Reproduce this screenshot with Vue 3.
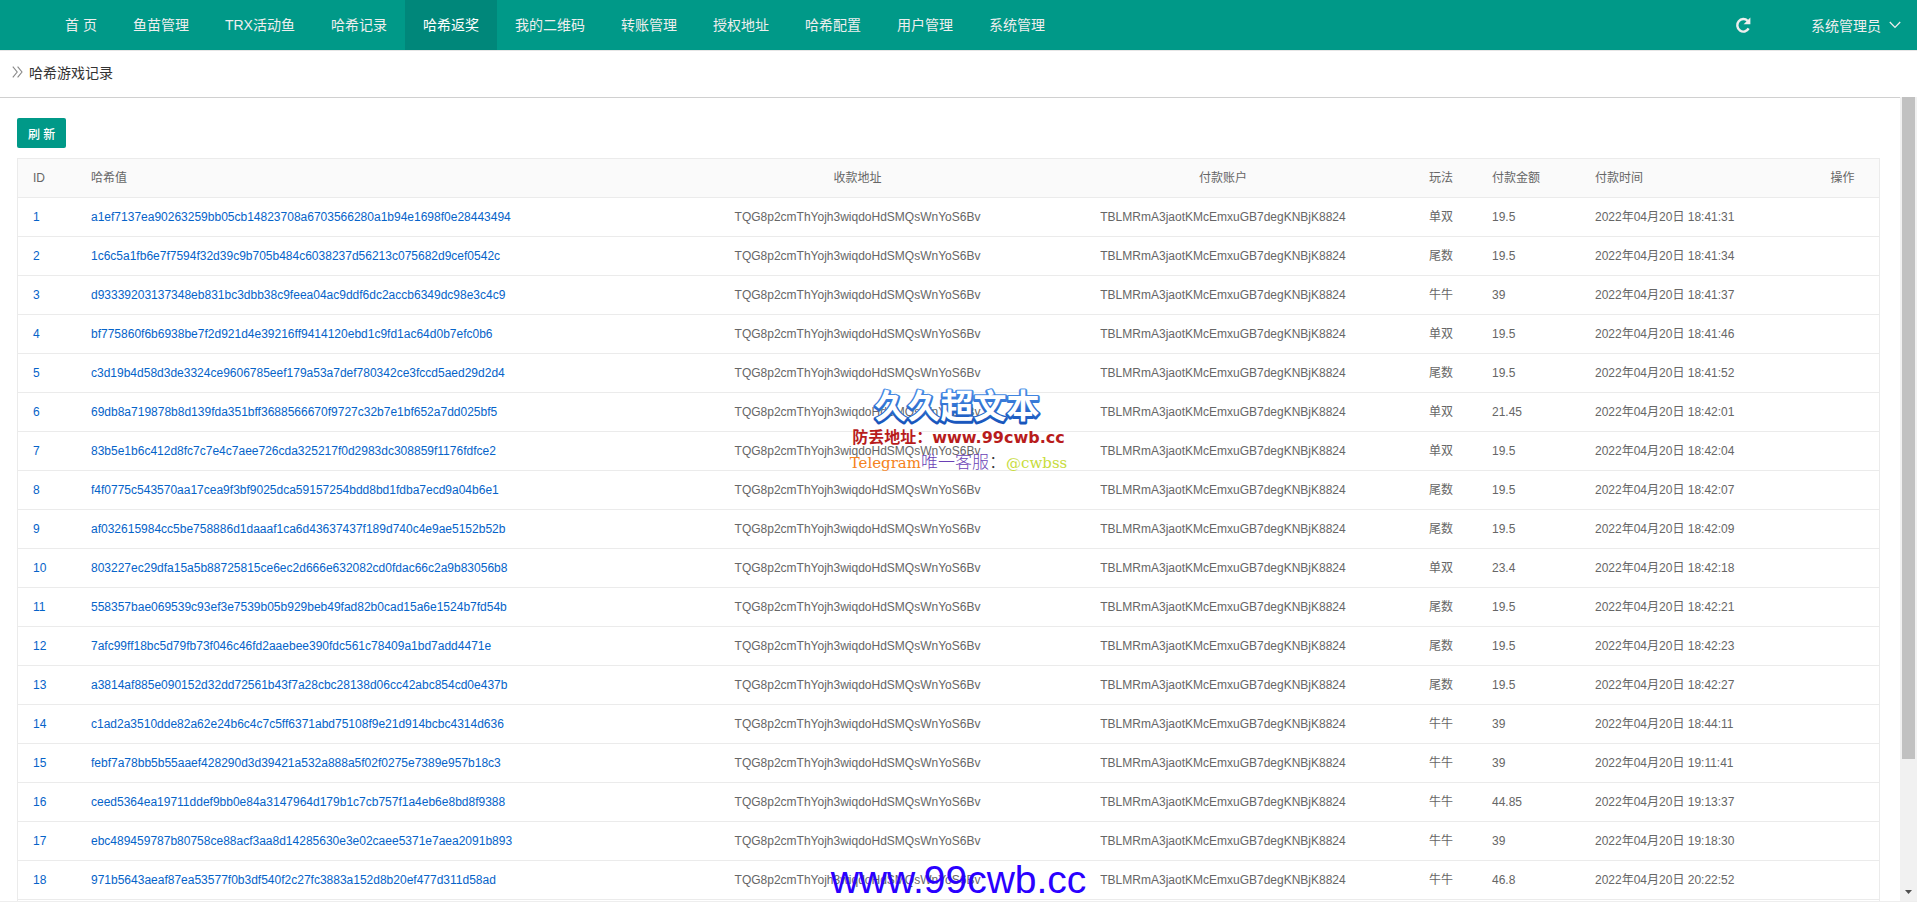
<script setup>
const nav = ['首 页', '鱼苗管理', 'TRX活动鱼', '哈希记录', '哈希返奖', '我的二维码', '转账管理', '授权地址', '哈希配置', '用户管理', '系统管理']
const active = '哈希返奖'

const receiver = 'TQG8p2cmThYojh3wiqdoHdSMQsWnYoS6Bv'
const payer = 'TBLMRmA3jaotKMcEmxuGB7degKNBjK8824'

const rows = [
  ['a1ef7137ea90263259bb05cb14823708a6703566280a1b94e1698f0e28443494', '单双', '19.5', '18:41:31'],
  ['1c6c5a1fb6e7f7594f32d39c9b705b484c6038237d56213c075682d9cef0542c', '尾数', '19.5', '18:41:34'],
  ['d93339203137348eb831bc3dbb38c9feea04ac9ddf6dc2accb6349dc98e3c4c9', '牛牛', '39', '18:41:37'],
  ['bf775860f6b6938be7f2d921d4e39216ff9414120ebd1c9fd1ac64d0b7efc0b6', '单双', '19.5', '18:41:46'],
  ['c3d19b4d58d3de3324ce9606785eef179a53a7def780342ce3fccd5aed29d2d4', '尾数', '19.5', '18:41:52'],
  ['69db8a719878b8d139fda351bff3688566670f9727c32b7e1bf652a7dd025bf5', '单双', '21.45', '18:42:01'],
  ['83b5e1b6c412d8fc7c7e4c7aee726cda325217f0d2983dc308859f1176fdfce2', '单双', '19.5', '18:42:04'],
  ['f4f0775c543570aa17cea9f3bf9025dca59157254bdd8bd1fdba7ecd9a04b6e1', '尾数', '19.5', '18:42:07'],
  ['af032615984cc5be758886d1daaaf1ca6d43637437f189d740c4e9ae5152b52b', '尾数', '19.5', '18:42:09'],
  ['803227ec29dfa15a5b88725815ce6ec2d666e632082cd0fdac66c2a9b83056b8', '单双', '23.4', '18:42:18'],
  ['558357bae069539c93ef3e7539b05b929beb49fad82b0cad15a6e1524b7fd54b', '尾数', '19.5', '18:42:21'],
  ['7afc99ff18bc5d79fb73f046c46fd2aaebee390fdc561c78409a1bd7add4471e', '尾数', '19.5', '18:42:23'],
  ['a3814af885e090152d32dd72561b43f7a28cbc28138d06cc42abc854cd0e437b', '尾数', '19.5', '18:42:27'],
  ['c1ad2a3510dde82a62e24b6c4c7c5ff6371abd75108f9e21d914bcbc4314d636', '牛牛', '39', '18:44:11'],
  ['febf7a78bb5b55aaef428290d3d39421a532a888a5f02f0275e7389e957b18c3', '牛牛', '39', '19:11:41'],
  ['ceed5364ea19711ddef9bb0e84a3147964d179b1c7cb757f1a4eb6e8bd8f9388', '牛牛', '44.85', '19:13:37'],
  ['ebc489459787b80758ce88acf3aa8d14285630e3e02caee5371e7aea2091b893', '牛牛', '39', '19:18:30'],
  ['971b5643aeaf87ea53577f0b3df540f2c27fc3883a152d8b20ef477d311d58ad', '牛牛', '46.8', '20:22:52']
].map(([hash, game, amount, time], i) => ({ id: i + 1, hash, game, amount, time: '2022年04月20日 ' + time }))
</script>

<template>
  <div class="page">
    <header class="topbar">
      <nav class="nav">
        <a v-for="item in nav" :key="item" href="#" :class="{ active: item === active }">{{ item }}</a>
      </nav>
      <button class="reload" type="button" aria-label="刷新页面">
        <svg width="16" height="16" viewBox="0 0 16 16">
          <path d="M12.6 3.9A6 6.3 0 1 0 13.6 11.4" fill="none" stroke="currentColor" stroke-width="2.4" />
          <path d="M15.4 0.6V7.2H8.6Z" fill="currentColor" />
        </svg>
      </button>
      <button class="user" type="button">
        <span>系统管理员</span>
        <svg width="12" height="8" viewBox="0 0 12 8">
          <path d="M0.8 1L6 6.4L11.2 1" fill="none" stroke="currentColor" stroke-width="1.3" />
        </svg>
      </button>
    </header>

    <div class="crumb">
      <svg width="11" height="12" viewBox="0 0 11 12">
        <path d="M0.8 0.6L5.2 6L0.8 11.4M5.6 0.6L10 6L5.6 11.4" fill="none" stroke="#888" stroke-width="1.1" />
      </svg>
      <h1>哈希游戏记录</h1>
    </div>

    <div class="frame">
      <main class="content">
        <button class="refresh" type="button">刷 新</button>
        <table class="records">
          <colgroup>
            <col class="c-id" /><col /><col class="c-recv" /><col class="c-pay" />
            <col class="c-game" /><col class="c-amount" /><col class="c-time" /><col class="c-op" />
          </colgroup>
          <thead>
            <tr>
              <th>ID</th>
              <th>哈希值</th>
              <th class="mid">收款地址</th>
              <th class="mid">付款账户</th>
              <th>玩法</th>
              <th>付款金额</th>
              <th>付款时间</th>
              <th class="mid">操作</th>
            </tr>
          </thead>
          <tbody>
            <tr v-for="row in rows" :key="row.id">
              <td class="blue">{{ row.id }}</td>
              <td><a href="#" class="blue">{{ row.hash }}</a></td>
              <td class="mid">{{ receiver }}</td>
              <td class="mid">{{ payer }}</td>
              <td>{{ row.game }}</td>
              <td>{{ row.amount }}</td>
              <td>{{ row.time }}</td>
              <td></td>
            </tr>
            <tr class="blank"><td colspan="8"></td></tr>
          </tbody>
        </table>
      </main>
      <div class="scrollbar" aria-hidden="true">
        <div class="thumb"></div>
        <svg width="7" height="4" viewBox="0 0 7 4"><path d="M0 0H7L3.5 4Z" fill="#505050" /></svg>
      </div>
    </div>

    <div class="mark">
      <svg class="mark-title" width="180" height="42" viewBox="0 0 180 42">
        <defs>
          <linearGradient id="markBlue" x1="0" y1="0" x2="0" y2="1">
            <stop offset="0" stop-color="#4a90e8" />
            <stop offset="1" stop-color="#1450b8" />
          </linearGradient>
        </defs>
        <text x="88" y="33" text-anchor="middle" class="outline">久久超文本</text>
        <text x="88" y="32" text-anchor="middle" class="face">久久超文本</text>
      </svg>
      <div class="mark-site">防丢地址：www.99cwb.cc</div>
      <div class="mark-chat"><span class="orange">Telegram</span><span class="purple">唯一客服</span><span class="dark">：</span><span class="lime">@cwbss</span></div>
    </div>
    <div class="mark-foot">www.99cwb.cc</div>
  </div>
</template>

<style>
body {
  margin: 0;
  background: #fff;
}
</style>

<style scoped>
.page {
  position: relative;
  display: flex;
  flex-direction: column;
  height: 100vh;
  overflow: hidden;
  box-sizing: border-box;
  padding-bottom: 2px;
  font-family: "Liberation Sans", "Noto Sans CJK SC", sans-serif;
  font-size: 12px;
  color: #666;
}
button {
  border: 0;
  padding: 0;
  background: none;
  font: inherit;
  color: inherit;
}
a {
  text-decoration: none;
}
.topbar {
  flex: none;
  display: flex;
  align-items: center;
  height: 50px;
  padding: 0 16px 0 47px;
  background: #009988;
  border-bottom: 1px solid #e6e6e6;
  color: #eee;
  font-size: 14px;
}
.nav {
  display: flex;
  flex: 1;
}
.nav a {
  padding: 0 18px;
  line-height: 50px;
  color: #eee;
  white-space: nowrap;
}
.nav a.active {
  background: #00877a;
  color: #fff;
}
.reload {
  display: flex;
  margin-right: 60px;
}
.user {
  display: flex;
  align-items: center;
  gap: 8px;
}
.crumb {
  flex: none;
  display: flex;
  align-items: center;
  gap: 6px;
  height: 42px;
  padding: 0 12px 4px;
}
.crumb h1 {
  margin: 0;
  font-size: 14px;
  font-weight: 400;
  color: #333;
}
.frame {
  flex: 1;
  min-height: 0;
  display: flex;
  border-bottom: 1px solid #eee;
}
.content {
  flex: 1;
  min-width: 0;
  overflow: hidden;
  border-top: 1px solid #d0d0d0;
  padding: 20px 20px 0 17px;
}
.refresh {
  display: block;
  height: 30px;
  padding: 0 11px;
  margin-bottom: 10px;
  border-radius: 2px;
  background: #009988;
  color: #fff;
  font-weight: 500;
}
.records {
  width: 100%;
  table-layout: fixed;
  border-collapse: separate;
  border-spacing: 0;
  border: 1px solid #ebebeb;
  border-bottom: 0;
}
.c-id { width: 58px; }
.c-recv { width: 349px; }
.c-pay { width: 382px; }
.c-game { width: 63px; }
.c-amount { width: 103px; }
.c-time { width: 226px; }
.c-op { width: 73px; }
.records th,
.records td {
  height: 20px;
  padding: 9px 15px;
  border-bottom: 1px solid #ebebeb;
  line-height: 20px;
  font-weight: 400;
  text-align: left;
  white-space: nowrap;
}
.records th {
  background: #fafafa;
}
.records .mid {
  text-align: center;
}
.records .blue {
  color: #0563c9;
}
.scrollbar {
  flex: none;
  display: flex;
  flex-direction: column;
  align-items: center;
  justify-content: space-between;
  width: 17px;
  box-sizing: border-box;
  padding-bottom: 7px;
  background: #f1f1f1;
}
.thumb {
  width: 13px;
  height: 83%;
  background: #c1c1c1;
}
.mark {
  position: absolute;
  top: 386px;
  left: 0;
  right: 0;
  display: flex;
  flex-direction: column;
  align-items: center;
  pointer-events: none;
}
.mark-title {
  display: block;
  font-size: 33px;
  font-weight: 700;
}
.outline {
  fill: url(#markBlue);
  stroke: url(#markBlue);
  stroke-width: 4;
  stroke-linejoin: round;
}
.face {
  fill: #fff;
}
.mark-site {
  line-height: 20px;
  font-family: "DejaVu Sans", "Noto Sans CJK SC", sans-serif;
  font-size: 16px;
  font-weight: 700;
  color: #b81c1c;
}
.mark-chat {
  line-height: 28px;
  font-family: "DejaVu Serif", "Noto Sans CJK SC", serif;
  font-size: 15px;
}
.orange { color: #f58220; }
.purple { color: #6a3fb5; font-size: 17px; font-weight: 300; }
.dark { color: #333; font-size: 17px; font-weight: 300; }
.lime { color: #c8dc3c; }
.mark-foot {
  position: absolute;
  left: 0;
  right: 0;
  bottom: 2px;
  line-height: 44px;
  text-align: center;
  font-size: 39px;
  color: #2a00ff;
  pointer-events: none;
}
</style>
